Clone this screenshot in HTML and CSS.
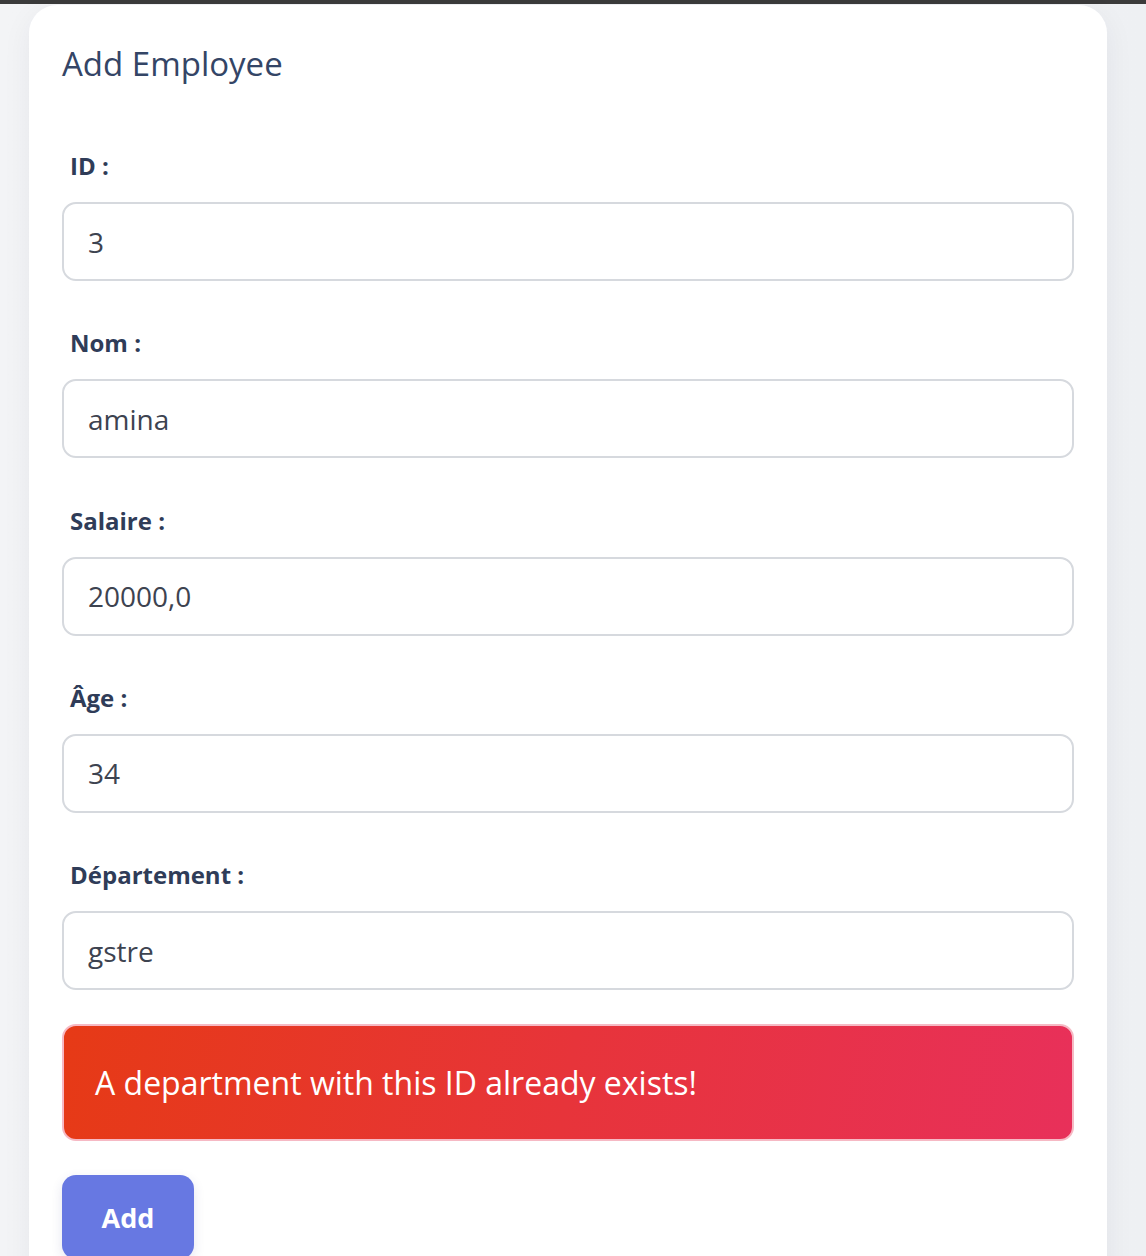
FILE: index.html
```html
<!DOCTYPE html>
<html lang="fr">
<head>
<meta charset="utf-8">
<title>Add Employee</title>
<link rel="stylesheet" href="styles.css">
</head>
<body>
<div class="topbar"></div>
<main class="page">
  <section class="card">
    <h2 class="title">Add Employee</h2>
    <form class="form">
      <div class="field">
        <label class="label" for="id">ID :</label>
        <input class="input" id="id" type="text" value="3">
      </div>
      <div class="field">
        <label class="label" for="nom">Nom :</label>
        <input class="input" id="nom" type="text" value="amina">
      </div>
      <div class="field">
        <label class="label" for="salaire">Salaire :</label>
        <input class="input" id="salaire" type="text" value="20000,0">
      </div>
      <div class="field">
        <label class="label" for="age">Âge :</label>
        <input class="input" id="age" type="text" value="34">
      </div>
      <div class="field field-last">
        <label class="label" for="dep">Département :</label>
        <input class="input" id="dep" type="text" value="gstre">
      </div>
      <div class="alert">A department with this ID already exists!</div>
      <button class="btn" type="button">Add</button>
    </form>
  </section>
</main>
</body>
</html>
```
FILE: styles.css
```css
* { box-sizing: border-box; }
html, body { margin: 0; padding: 0; }
body {
  background: linear-gradient(90deg, #f3f4f6 0%, #eef0f3 100%);
  font-family: "Open Sans", "Noto Sans", sans-serif;
  height: 1256px;
  overflow: hidden;
}
.topbar {
  height: 4px;
  background: #3b3b3b;
}
.page {
  padding: 1px 39px 0 29px;
}
.card {
  background: #ffffff;
  border-radius: 28px;
  padding: 38px 33px 40px 33px;
  box-shadow: 0 8px 30px rgba(30, 40, 60, 0.06);
  min-height: 1300px;
}
.title {
  margin: 0 0 65px 0;
  font-size: 33px;
  font-weight: 500;
  line-height: 42px;
  color: #344566;
}
.form { display: flex; flex-direction: column; }
.field { display: flex; flex-direction: column; margin-bottom: 46.25px; }
.field-last { margin-bottom: 34px; }
.label {
  display: block;
  padding-left: 8px;
  font-size: 24px;
  font-weight: 700;
  line-height: 32px;
  color: #2f3c58;
  margin-bottom: 20px;
}
.input {
  display: block;
  width: 100%;
  height: 79px;
  border: 2px solid #d6d9de;
  border-radius: 14px;
  padding: 0 24px;
  font-family: "Open Sans", "Noto Sans", sans-serif;
  font-size: 28px;
  color: #3d4350;
  background: #fff;
  outline: none;
}
.alert {
  height: 117px;
  border: 2px solid #f6b9c4;
  border-radius: 14px;
  background: linear-gradient(100deg, #e63a16 0%, #e7343a 50%, #e8305a 100%);
  color: #ffffff;
  font-size: 32px;
  line-height: 1;
  display: flex;
  align-items: center;
  padding: 0 31px;
  margin-bottom: 34px;
}
.btn {
  align-self: flex-start;
  width: 132px;
  height: 84px;
  border: none;
  border-radius: 14px;
  background: #6778e2;
  color: #fff;
  font-family: "Open Sans", "Noto Sans", sans-serif;
  font-size: 27px;
  font-weight: 700;
  box-shadow: 0 4px 12px rgba(40, 50, 120, 0.12);
}
```
